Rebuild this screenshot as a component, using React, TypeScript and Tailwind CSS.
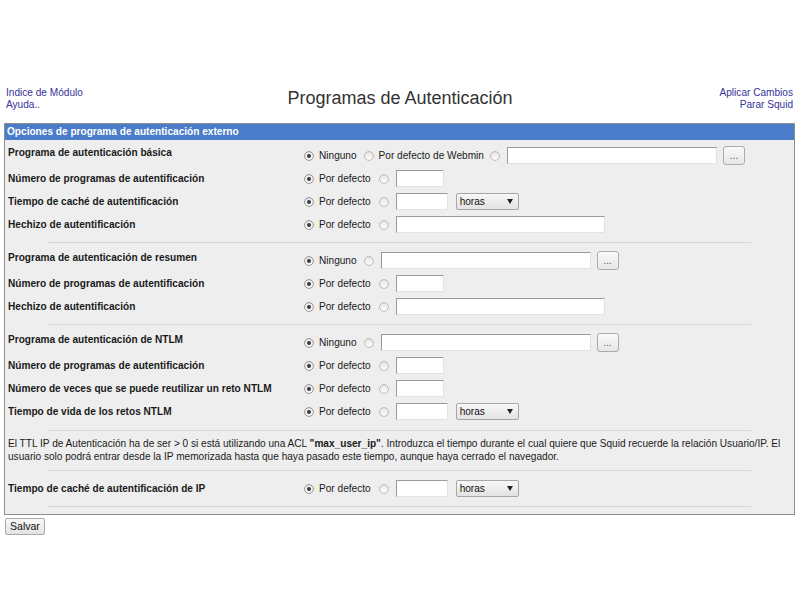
import React from "react";

function Radio({ checked }: { checked?: boolean }) {
  return (
    <svg width="10" height="10" viewBox="0 0 10 10" className="shrink-0">
      <defs>
        <linearGradient id="rg" x1="0" y1="0" x2="0" y2="1">
          <stop offset="0" stopColor="#e4e4e4" />
          <stop offset="1" stopColor="#ffffff" />
        </linearGradient>
      </defs>
      <circle cx="5" cy="5" r="4.4" fill="url(#rg)" stroke={checked ? "#8a8a8a" : "#b4b4b4"} strokeWidth="0.9" />
      {checked && <circle cx="5" cy="5" r="2" fill="#3a3a3a" />}
    </svg>
  );
}

function Input({ w }: { w: string }) {
  return (
    <div
      className={`${w} h-[17px] shrink-0 bg-white border border-[#e2e2e2] border-t-[#9a9a9a] border-l-[#9a9a9a]`}
    />
  );
}

function Select() {
  return (
    <div className="ml-[8px] w-[63px] h-[17px] shrink-0 flex items-center justify-between pl-[3px] pr-[5px] border border-[#a6a6a6] rounded-[2px] bg-gradient-to-b from-[#f7f7f7] to-[#e3e3e3] text-[#111]">
      <span className="leading-[13px]">horas</span>
      <svg width="6" height="5" viewBox="0 0 6 5">
        <path d="M0 0 H6 L3 5 Z" fill="#222" />
      </svg>
    </div>
  );
}

function Btn() {
  return (
    <div className="ml-[6px] w-[22px] h-[19px] shrink-0 flex items-end justify-center pb-[3px] border border-[#ababab] rounded-[3px] bg-gradient-to-b from-[#fafafa] to-[#e6e6e6] text-[#555] leading-[10px]">
      ...
    </div>
  );
}

function Row({ label, first, children }: { label: string; first?: boolean; children: React.ReactNode }) {
  return (
    <div className="flex h-[23px]">
      <div className={`w-[296px] shrink-0 font-bold leading-[13px] ${first ? "pt-[2px]" : "pt-[5px]"}`}>{label}</div>
      <div className="flex items-center">{children}</div>
    </div>
  );
}

function PorDefecto({ children }: { children: React.ReactNode }) {
  return (
    <>
      <Radio checked />
      <span className="ml-[5px]">Por defecto</span>
      <span className="ml-[8px] flex">
        <Radio />
      </span>
      <span className="ml-[7px] flex items-center">{children}</span>
    </>
  );
}

function NingunoBrowse() {
  return (
    <>
      <Radio checked />
      <span className="ml-[5px]">Ninguno</span>
      <span className="ml-[7px] flex">
        <Radio />
      </span>
      <span className="ml-[7px] flex items-center">
        <Input w="w-[210px]" />
        <Btn />
      </span>
    </>
  );
}

function Sep({ top }: { top: string }) {
  return <div className={`${top} mb-[6px] mx-[43px] h-px bg-[#d6d6d6]`} />;
}

export default function App() {
  return (
    <div className="min-h-[600px] bg-white font-['Liberation_Sans',Arial,sans-serif] text-[10.1px] text-[#1a1a1a] pt-[87px]">
      <div className="grid grid-cols-[1fr_auto_1fr] items-start px-[6px]">
        <div className="flex flex-col leading-[12px] text-[#333399]">
          <span>Indice de Módulo</span>
          <span>Ayuda..</span>
        </div>
        <div className="text-[18px] leading-[22px] text-[#333]">Programas de Autenticación</div>
        <div className="flex flex-col items-end leading-[12px] text-[#333399] pr-[1px]">
          <span>Aplicar Cambios</span>
          <span>Parar Squid</span>
        </div>
      </div>

      <div className="mt-[12px] ml-[4px] mr-[5px] border border-[#8e8e8e] bg-[#eeeeee]">
        <div className="h-[16px] leading-[16px] bg-[#4b7cc9] text-white font-bold pl-[2px]">
          Opciones de programa de autenticación externo
        </div>
        <div className="pl-[3px] pt-[4px]">
          <Row label="Programa de autenticación básica" first>
            <Radio checked />
            <span className="ml-[5px]">Ninguno</span>
            <span className="ml-[7px] flex">
              <Radio />
            </span>
            <span className="ml-[5px]">Por defecto de Webmin</span>
            <span className="ml-[6px] flex">
              <Radio />
            </span>
            <span className="ml-[7px] flex items-center">
              <Input w="w-[210px]" />
              <Btn />
            </span>
          </Row>
          <Row label="Número de programas de autentificación">
            <PorDefecto>
              <Input w="w-[48px]" />
            </PorDefecto>
          </Row>
          <Row label="Tiempo de caché de autentificación">
            <PorDefecto>
              <Input w="w-[52px]" />
              <Select />
            </PorDefecto>
          </Row>
          <Row label="Hechizo de autentificación">
            <PorDefecto>
              <Input w="w-[209px]" />
            </PorDefecto>
          </Row>
        </div>
        <Sep top="mt-[6px]" />
        <div className="pl-[3px]">
          <Row label="Programa de autenticación de resumen" first>
            <NingunoBrowse />
          </Row>
          <Row label="Número de programas de autentificación">
            <PorDefecto>
              <Input w="w-[48px]" />
            </PorDefecto>
          </Row>
          <Row label="Hechizo de autentificación">
            <PorDefecto>
              <Input w="w-[209px]" />
            </PorDefecto>
          </Row>
        </div>
        <Sep top="mt-[6px]" />
        <div className="pl-[3px]">
          <Row label="Programa de autenticación de NTLM" first>
            <NingunoBrowse />
          </Row>
          <Row label="Número de programas de autentificación">
            <PorDefecto>
              <Input w="w-[48px]" />
            </PorDefecto>
          </Row>
          <Row label="Número de veces que se puede reutilizar un reto NTLM">
            <PorDefecto>
              <Input w="w-[48px]" />
            </PorDefecto>
          </Row>
          <Row label="Tiempo de vida de los retos NTLM">
            <PorDefecto>
              <Input w="w-[52px]" />
              <Select />
            </PorDefecto>
          </Row>
        </div>
        <Sep top="mt-[7px]" />
        <p className="pl-[3px] leading-[13px]">
          El TTL IP de Autenticación ha de ser &gt; 0 si está utilizando una ACL <b>"max_user_ip"</b>. Introduzca el
          tiempo durante el cual quiere que Squid recuerde la relación Usuario/IP. El usuario solo podrá entrar desde la
          IP memorizada hasta que haya pasado este tiempo, aunque haya cerrado el navegador.
        </p>
        <Sep top="mt-[7px]" />
        <div className="pl-[3px]">
          <Row label="Tiempo de caché de autentificación de IP">
            <PorDefecto>
              <Input w="w-[52px]" />
              <Select />
            </PorDefecto>
          </Row>
        </div>
        <div className="mt-[6px] mb-[7px] mx-[43px] h-px bg-[#d6d6d6]" />
      </div>

      <div className="mt-[3px] ml-[5px] w-[40px] h-[17px] flex items-center justify-center border border-[#a9a9a9] rounded-[2px] bg-gradient-to-b from-[#fafafa] to-[#e2e2e2] text-[10.5px] text-[#111]">
        Salvar
      </div>
    </div>
  );
}
